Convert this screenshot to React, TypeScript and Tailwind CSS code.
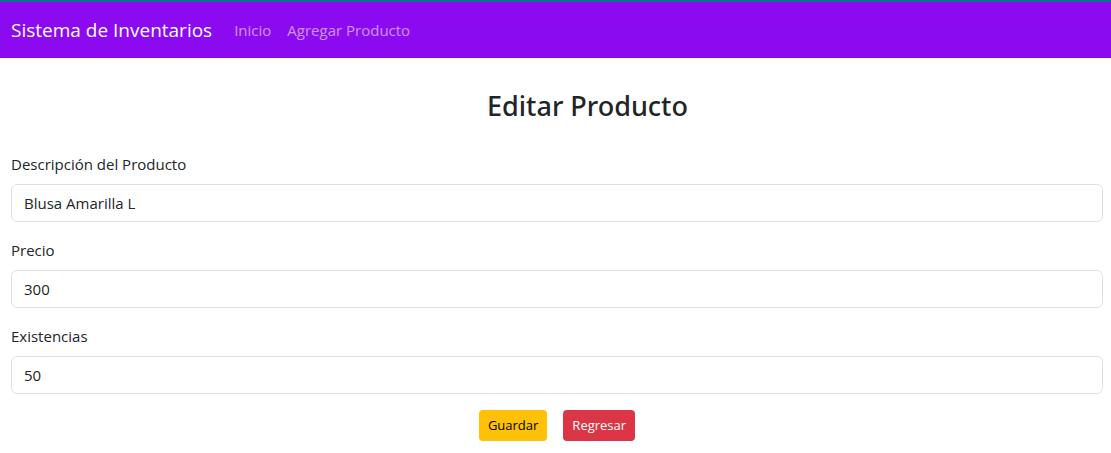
import { useState } from "react";

type Field = { id: string; label: string; type: string; initial: string };

const fields: Field[] = [
  { id: "descripcion", label: "Descripción del Producto", type: "text", initial: "Blusa Amarilla L" },
  { id: "precio", label: "Precio", type: "text", initial: "300" },
  { id: "existencias", label: "Existencias", type: "text", initial: "50" },
];

function Navbar() {
  return (
    <nav className="flex items-center border-t-2 border-[#08738f] bg-[#8b0af0] py-2 pl-[11px]">
      <a href="#" className="mr-3.5 text-[19px] leading-8 text-white">Sistema de Inventarios</a>
      <ul className="flex">
        <li><a href="#inicio" className="block p-2 text-[15px] leading-6 text-white/55">Inicio</a></li>
        <li><a href="#agregar" className="block p-2 text-[15px] leading-6 text-white/55">Agregar Producto</a></li>
      </ul>
    </nav>
  );
}

function FormField({ field }: { field: Field }) {
  const [value, setValue] = useState(field.initial);
  return (
    <div className="mb-4">
      <label htmlFor={field.id} className="mb-2 inline-block text-[15px] leading-6">{field.label}</label>
      <input
        id={field.id}
        type={field.type}
        value={value}
        onChange={(e) => setValue(e.target.value)}
        className="block h-[38px] w-full rounded-md border border-[#dee2e6] bg-white px-3 text-[15px]"
      />
    </div>
  );
}

export default function App() {
  return (
    <div className="bg-white font-['Open_Sans','Noto_Sans',sans-serif] text-[#212529]">
      <Navbar />
      <main>
        <h3 className="mt-8 mb-[30px] pl-16 text-center font-['Noto_Sans',sans-serif] text-[27px] leading-8 font-medium">
          Editar Producto
        </h3>
        <form className="pr-2 pl-[11px]" onSubmit={(e) => e.preventDefault()}>
          {fields.map((f) => <FormField key={f.id} field={f} />)}
          <div className="flex justify-center gap-4">
            <button type="submit" className="h-[31px] rounded bg-[#ffc107] px-[9px] text-[13px] text-black">Guardar</button>
            <a href="#inicio" className="flex h-[31px] items-center rounded bg-[#dc3545] px-[9px] text-[13px] text-white">Regresar</a>
          </div>
        </form>
      </main>
    </div>
  );
}
